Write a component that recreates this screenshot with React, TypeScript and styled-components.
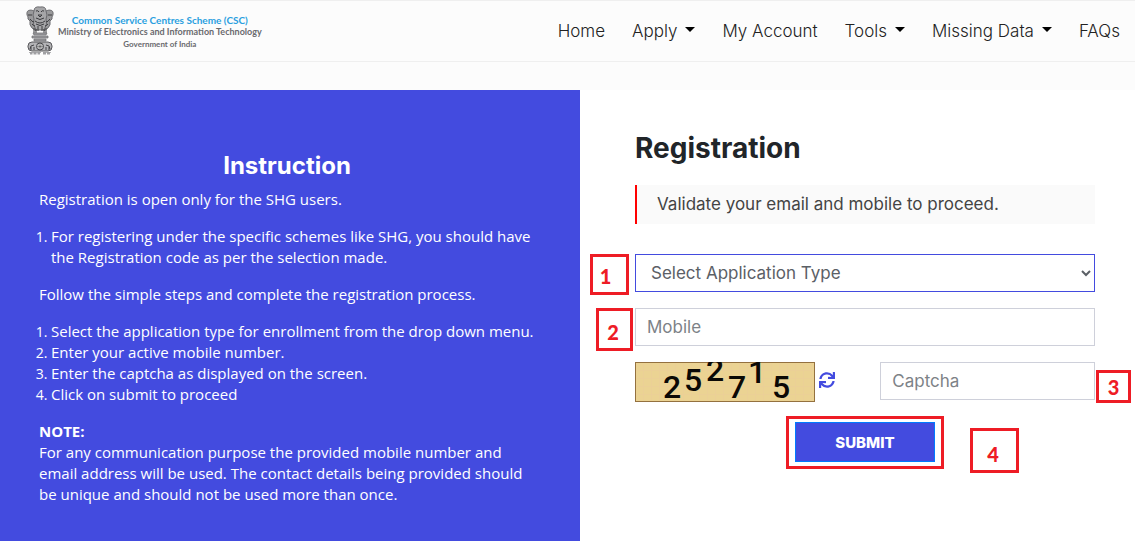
import React from "react";
import styled, { createGlobalStyle, css } from "styled-components";
import { FaSync } from "react-icons/fa";

const ui = `Inter, "Open Sans", sans-serif`;

const GlobalStyle = createGlobalStyle`
  * { box-sizing: border-box; }
  body {
    margin: 0;
    background: #fff;
    color: #212529;
    font-family: ${ui};
    font-size: 17px;
    line-height: 24px;
  }
  h1, h2, p, ol { margin: 0; }
`;

const Page = styled.div`
  min-height: 100vh;
  display: flex;
  flex-direction: column;
`;

const Header = styled.header`
  display: flex;
  align-items: center;
  justify-content: space-between;
  height: 62px;
  padding: 0 15px 0 24px;
  background: #fcfcfc;
  border-top: 1px solid #efefef;
  border-bottom: 1px solid #efefef;
`;

const Brand = styled.a`
  display: flex;
  align-items: center;
  gap: 2px;
  text-decoration: none;
`;

const BrandText = styled.span`
  display: flex;
  flex-direction: column;
  align-items: center;
  padding-top: 2px;
  font-family: Lato, sans-serif;
  font-weight: 700;
  line-height: 12px;
  white-space: nowrap;
`;

const BrandLine = styled.span<{ $size: number; $color?: string }>`
  font-size: ${(p) => p.$size}px;
  color: ${(p) => p.$color || "#6a6a6e"};
`;

const Nav = styled.nav`
  display: flex;
  gap: 27px;
`;

const NavLink = styled.a<{ $menu?: boolean }>`
  display: flex;
  align-items: center;
  gap: 8px;
  color: #222;
  font-weight: 300;
  text-decoration: none;
  white-space: nowrap;
  ${(p) =>
    p.$menu &&
    css`
      &::after {
        content: "";
        border: 5px solid transparent;
        border-top-color: #000;
        border-bottom: 0;
        margin-bottom: 3px;
      }
    `}
`;

const Strip = styled.div`
  height: 28px;
  background: #fcfcfc;
`;

const Main = styled.main`
  flex: 1;
  display: grid;
  grid-template-columns: 580fr 555fr;
`;

const Instructions = styled.section`
  background: #434bdf;
  color: #fff;
  padding: 60px 45px 32px 39px;
  font-family: "Open Sans", sans-serif;
  font-size: 15px;
  line-height: 21px;
`;

const InstructionTitle = styled.h2`
  font-family: ${ui};
  font-size: 24px;
  line-height: 31px;
  font-weight: 700;
  text-align: center;
  margin-bottom: 8px;
`;

const Paragraph = styled.p`
  margin-bottom: 16px;
`;

const Steps = styled.ol`
  padding-left: 12px;
  margin-bottom: 16px;
  white-space: nowrap;

  li::marker {
    font-size: 14px;
  }
`;

const Registration = styled.section`
  padding: 42px 40px 32px 55px;
`;

const Title = styled.h1`
  font-size: 28px;
  line-height: 32px;
  font-weight: 700;
  margin-bottom: 21px;
`;

const Notice = styled.p`
  border-left: 2px solid #f00;
  background: #fafafa;
  color: #444;
  line-height: 39px;
  padding-left: 20px;
  margin-bottom: 30px;
`;

const Form = styled.form`
  display: flex;
  flex-direction: column;
  gap: 16px;
`;

const Field = styled.div`
  position: relative;
`;

const control = css`
  display: block;
  width: 100%;
  height: 38px;
  background: #fff;
  border-radius: 0;
  font-family: ${ui};
  font-size: 17px;
  font-weight: 400;
`;

const Select = styled.select`
  ${control}
  border: 1px solid #434bdf;
  padding: 6px 0 6px 11px;
  color: #5b6066;
`;

const Input = styled.input`
  ${control}
  border: 1px solid #ced0da;
  padding: 6px 11px;
  color: #495057;
  &::placeholder { color: #7d8287; opacity: 1; }
`;

const CaptchaRow = styled.div`
  display: grid;
  grid-template-columns: 8fr 7fr;
  height: 38px;
`;

const CaptchaImage = styled.div`
  display: flex;
  align-items: flex-start;
  gap: 4px;
`;

const Refresh = styled.button`
  display: flex;
  border: 0;
  padding: 0;
  margin-top: 10px;
  background: none;
  color: #434bdf;
  font-size: 16px;
`;

const SubmitRow = styled.div`
  position: relative;
  display: flex;
  justify-content: center;
  padding-top: 6px;
`;

const SubmitWrap = styled.div`
  position: relative;
`;

const Submit = styled.button`
  display: block;
  width: 140px;
  height: 40px;
  border: 1px solid #007bff;
  background: #434bdf;
  color: #fff;
  font-family: ${ui};
  font-size: 15px;
  font-weight: 800;
`;

const Frame = styled.span`
  position: absolute;
  inset: -6px -9px -7px;
  border: 3px solid #ee1c25;
  pointer-events: none;
`;

const Marker = styled.span<{ $w: number; $h: number; $x: number; $y: number; $pad?: string }>`
  position: absolute;
  left: ${(p) => (p.$x < 0 ? `${p.$x}px` : `calc(100% + ${p.$x}px)`)};
  top: ${(p) => p.$y}px;
  width: ${(p) => p.$w}px;
  height: ${(p) => p.$h}px;
  padding: ${(p) => p.$pad || "0"};
  display: flex;
  align-items: center;
  justify-content: center;
  border: 3px solid #ee1c25;
  color: #ee1c25;
  font-family: Lato, sans-serif;
  font-size: 20px;
  line-height: 20px;
  font-weight: 900;
`;

const Emblem = () => (
  <svg width="32" height="50" viewBox="0 0 32 50" aria-hidden="true">
    <g fill="#9a9a9c" stroke="#5c5c5f" strokeWidth="0.8">
      <path d="M7 4Q2 4 3 9L4 11Q3 13 6 15Q5 19 8 22L12 25L12 7Q10 4 7 4Z" />
      <path d="M25 4Q30 4 29 9L28 11Q29 13 26 15Q27 19 24 22L20 25L20 7Q22 4 25 4Z" />
      <path d="M16 1Q10 0 10 5Q8 9 10 13Q8 18 12 24L20 24Q24 18 22 13Q24 9 22 5Q22 0 16 1Z" fill="#a6a6a8" />
    </g>
    <g fill="none" stroke="#3c3c3f" strokeWidth="1">
      <path d="M12 5q2-1 3 1M20 5q-2-1-3 1M14 9h4l-2 2zM12 12q4 3 8 0M11 15q5 4 10 0M12 18q4 3 8 0" />
      <path d="M4 9h4M28 9h-4M6 13q2 3 4 3M26 13q-2 3-4 3M8 18q2 2 3 2M24 18q-2 2-3 2M14 20v5M18 20v5" />
      <path d="M10 22v5M12 23v4M20 23v4M22 22v5" />
    </g>
    <path d="M9 27h14l-1 2H10zM8 30h16v2H8zM10 33h12v2H10z" fill="#a2a2a5" stroke="#68686b" strokeWidth="0.7" />
    <rect x="4" y="36" width="24" height="9" rx="4" fill="#b4b4b6" stroke="#58585b" strokeWidth="1" />
    <circle cx="16" cy="40.500" r="3.500" fill="#ddd" stroke="#444447" strokeWidth="1" />
    <path d="M16 37v7M12.500 40.500h7M13.500 38l5 5M18.500 38l-5 5" stroke="#555" strokeWidth="0.6" />
    <path d="M6 43q0-4 4-4M7 41v3M10 41v3M26 43q0-4-4-4M25 41v3M22 41v3" fill="none" stroke="#444447" strokeWidth="1" />
    <path d="M6 47.500h2.500M9.500 47.500h3M13.500 47.500h2.500M19 47.500h3M23 47.500h3" stroke="#a0a0a3" strokeWidth="2" />
    <path d="M5 46.500h12M19 46.500h8" stroke="#808083" strokeWidth="0.6" />
  </svg>
);

const digits: [string, number, number][] = [
  ["2", 37, 36],
  ["5", 58, 29],
  ["2", 80, 19],
  ["7", 102, 36],
  ["1", 122, 21],
  ["5", 146, 36],
];

const CaptchaPicture = () => (
  <svg width="180" height="40" viewBox="0 0 180 40" role="img" aria-label="Captcha code">
    <defs>
      <pattern id="paper" width="8" height="8" patternUnits="userSpaceOnUse">
        <rect width="8" height="8" fill="#ebd393" />
        <path d="M0 0h8M0 0v8" stroke="#ecce9a" />
      </pattern>
    </defs>
    <rect x="0.500" y="0.500" width="179" height="39" fill="url(#paper)" stroke="#94713f" />
    <g fontFamily="Roboto, sans-serif" fontSize="32" fontWeight="500" textAnchor="middle" fill="#0b0905">
      {digits.map(([d, x, y], i) => (
        <text key={i} x={x} y={y}>{d}</text>
      ))}
    </g>
  </svg>
);

export default function App() {
  return (
    <Page>
      <GlobalStyle />
      <Header>
        <Brand href="#">
          <Emblem />
          <BrandText>
            <BrandLine $size={10} $color="#2a9fe0">Common Service Centres Scheme (CSC)</BrandLine>
            <BrandLine $size={9}>Ministry of Electronics and Information Technology</BrandLine>
            <BrandLine $size={8}>Government of India</BrandLine>
          </BrandText>
        </Brand>
        <Nav>
          <NavLink href="#">Home</NavLink>
          <NavLink href="#" $menu>Apply</NavLink>
          <NavLink href="#">My Account</NavLink>
          <NavLink href="#" $menu>Tools</NavLink>
          <NavLink href="#" $menu>Missing Data</NavLink>
          <NavLink href="#">FAQs</NavLink>
        </Nav>
      </Header>
      <Strip />
      <Main>
        <Instructions>
          <InstructionTitle>Instruction</InstructionTitle>
          <Paragraph>Registration is open only for the SHG users.</Paragraph>
          <Steps>
            <li>
              For registering under the specific schemes like SHG, you should have
              <br />
              the Registration code as per the selection made.
            </li>
          </Steps>
          <Paragraph>Follow the simple steps and complete the registration process.</Paragraph>
          <Steps>
            <li>Select the application type for enrollment from the drop down menu.</li>
            <li>Enter your active mobile number.</li>
            <li>Enter the captcha as displayed on the screen.</li>
            <li>Click on submit to proceed</li>
          </Steps>
          <p>
            <strong>NOTE:</strong>
            <br />
            For any communication purpose the provided mobile number and
            <br />
            email address will be used. The contact details being provided should
            <br />
            be unique and should not be used more than once.
          </p>
        </Instructions>
        <Registration>
          <Title>Registration</Title>
          <Notice>Validate your email and mobile to proceed.</Notice>
          <Form onSubmit={(e) => e.preventDefault()}>
            <Field>
              <Select aria-label="Application type">
                <option>Select Application Type</option>
              </Select>
              <Marker $x={-45} $y={0} $w={39} $h={41} $pad="2px 8px 0 0">1</Marker>
            </Field>
            <Field>
              <Input aria-label="Mobile" placeholder="Mobile" />
              <Marker $x={-39} $y={0} $w={37} $h={43} $pad="4px 3px 0 0">2</Marker>
            </Field>
            <CaptchaRow>
              <CaptchaImage>
                <CaptchaPicture />
                <Refresh type="button" aria-label="Refresh captcha"><FaSync /></Refresh>
              </CaptchaImage>
              <Field>
                <Input aria-label="Captcha" placeholder="Captcha" />
                <Marker $x={1} $y={8} $w={35} $h={33}>3</Marker>
              </Field>
            </CaptchaRow>
            <SubmitRow>
              <SubmitWrap>
                <Submit type="submit">SUBMIT</Submit>
                <Frame />
                <Marker $x={35} $y={6} $w={49} $h={45} $pad="6px 3px 0 0">4</Marker>
              </SubmitWrap>
            </SubmitRow>
          </Form>
        </Registration>
      </Main>
    </Page>
  );
}
